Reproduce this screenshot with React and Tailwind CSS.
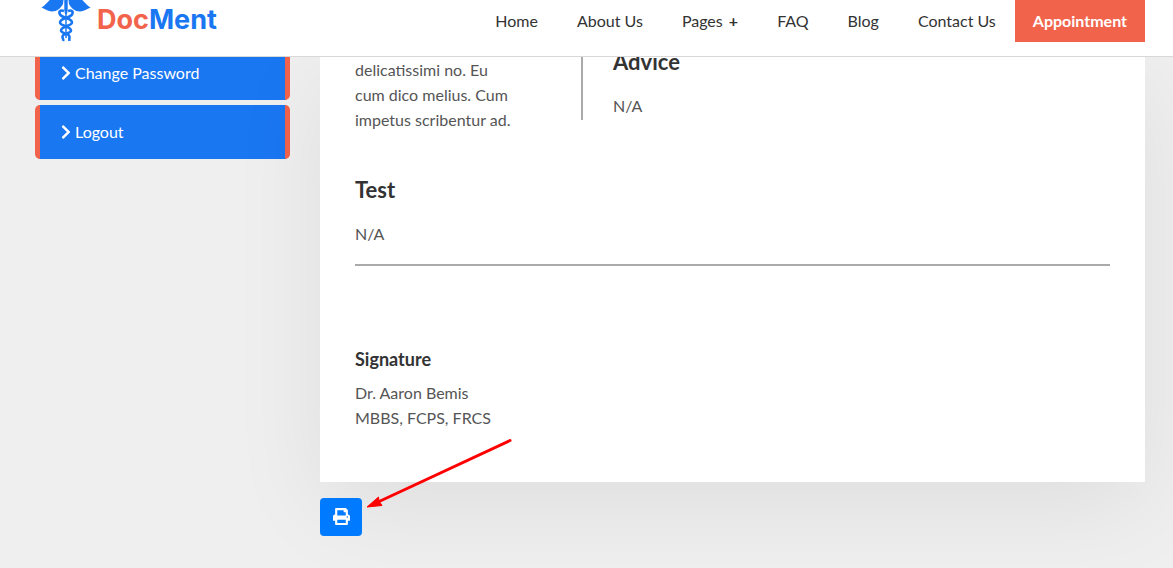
import { FaChevronRight, FaPrint } from "react-icons/fa";

const sidebarLinks = ["Change Password", "Logout"];

function Caduceus() {
  return (
    <svg viewBox="0 0 50 42" className="h-[42px] w-[50px] shrink-0" fill="none" stroke="#1a77f2" aria-hidden="true">
      <path d="M0.500 7.500C5 5 8 0 12-3L22.500 0L22 4C20 8 16 11.500 11 11.500C7 11.500 4 9 0.500 7.500Z" fill="#1a77f2" stroke="none" />
      <path d="M49.500 7.500C45 5 42 0 38-3L27.500 0L28 4C30 8 34 11.500 39 11.500C43 11.500 46 9 49.500 7.500Z" fill="#1a77f2" stroke="none" />
      <path d="M23.300 -4H26.700V10L26 14H24L23.300 10Z" fill="#1a77f2" stroke="none" />
      <path d="M25 12V38" strokeWidth="1.500" />
      <path d="M23 11C19 9.500 17.500 12 19 14.500C21 18 31 18 31 22.500C31 26 20 26 20 30.500C20 34 29 33 28.500 37C28.500 38.500 28 39 28.500 41" strokeWidth="2.600" />
      <path d="M27 11C31 9.500 32.500 12 31 14.500C29 18 19 18 19 22.500C19 26 30 26 30 30.500C30 34 21 33 21.500 37C21.500 39 23 39 22 41" strokeWidth="2.600" />
    </svg>
  );
}

function NavLink({ children }) {
  return (
    <a href="#" className="whitespace-nowrap text-[#333]">
      {children}
    </a>
  );
}

function Header() {
  return (
    <header className="relative z-10 flex h-[57px] items-start justify-between border-b border-[#d8d8d8] bg-white pr-7 pl-[41px]">
      <a href="#" className="flex items-start gap-1.5">
        <Caduceus />
        <span className="pt-[5px] font-[Inter,sans-serif] text-[27px] leading-[30px] font-bold text-[#1a77f2]">
          <span className="text-[#f2634c]">Doc</span>Ment
        </span>
      </a>
      <nav className="flex h-[42px] items-center gap-[39px] text-base">
        <NavLink>Home</NavLink>
        <NavLink>About Us</NavLink>
        <NavLink>
          Pages <span className="pl-0.5 font-bold">+</span>
        </NavLink>
        <NavLink>FAQ</NavLink>
        <NavLink>Blog</NavLink>
        <NavLink>Contact Us</NavLink>
        <a href="#" className="-ml-5 flex h-full items-center bg-[#f2634c] px-[18px] font-bold text-white">
          Appointment
        </a>
      </nav>
    </header>
  );
}

function Sidebar() {
  return (
    <aside className="-mt-3 flex w-[255px] shrink-0 flex-col gap-[5px]">
      {sidebarLinks.map((label) => (
        <a
          key={label}
          href="#"
          className="flex h-[54px] items-center gap-1 rounded-[5px] border-x-[5px] border-[#f2634c] bg-[#1a77f2] pl-[21px] text-base text-white first:h-[55px]"
        >
          <FaChevronRight className="h-4 w-2.5" />
          {label}
        </a>
      ))}
    </aside>
  );
}

function Heading({ children }) {
  return <h2 className="mb-[18px] text-[22px] leading-[26px] font-bold text-[#333]">{children}</h2>;
}

function Prescription() {
  return (
    <article className="bg-white px-[35px] pb-[52px] leading-[25px] shadow-[0_25px_90px_rgba(0,0,0,0.07)]">
      <div className="flex items-start">
        <p className="w-[226px] shrink-0">
          delicatissimi no. Eu
          <br />
          cum dico melius. Cum
          <br />
          impetus scribentur ad.
        </p>
        <section className="-mt-2 border-l-2 border-[#aaa] pb-0.5 pl-[30px]">
          <Heading>Advice</Heading>
          <p>N/A</p>
        </section>
      </div>
      <section className="mt-[45px] border-b-2 border-[#aaa] pb-[18px]">
        <Heading>Test</Heading>
        <p>N/A</p>
      </section>
      <section className="pt-20">
        <h3 className="mb-2 text-lg leading-[26px] font-bold text-[#333]">Signature</h3>
        <p>Dr. Aaron Bemis</p>
        <p>MBBS, FCPS, FRCS</p>
      </section>
    </article>
  );
}

export default function App() {
  return (
    <div className="flex min-h-screen flex-col bg-[#efefef] font-[Lato,sans-serif] text-base text-[#555]">
      <Header />
      <main className="flex flex-1 items-start gap-[30px] overflow-hidden pr-7 pb-8 pl-[35px]">
        <Sidebar />
        <div className="min-w-0 flex-1">
          <Prescription />
          <div className="relative mt-4">
            <button
              type="button"
              aria-label="Print"
              className="flex h-[38px] w-[42px] items-center justify-center rounded bg-[#007bff] pb-0.5 text-white"
            >
              <FaPrint className="size-[17px]" />
            </button>
            <svg
              viewBox="0 0 146 72"
              className="pointer-events-none absolute -top-[60px] left-[47px] h-[72px] w-[146px]"
              aria-hidden="true"
            >
              <path d="M143 2.500L10 64.500" stroke="#f00" strokeWidth="3" strokeLinecap="round" />
              <path d="M0 69L11.500 59L12 63L15 67.500Z" fill="#f00" stroke="#f00" strokeLinejoin="round" />
            </svg>
          </div>
        </div>
      </main>
    </div>
  );
}
